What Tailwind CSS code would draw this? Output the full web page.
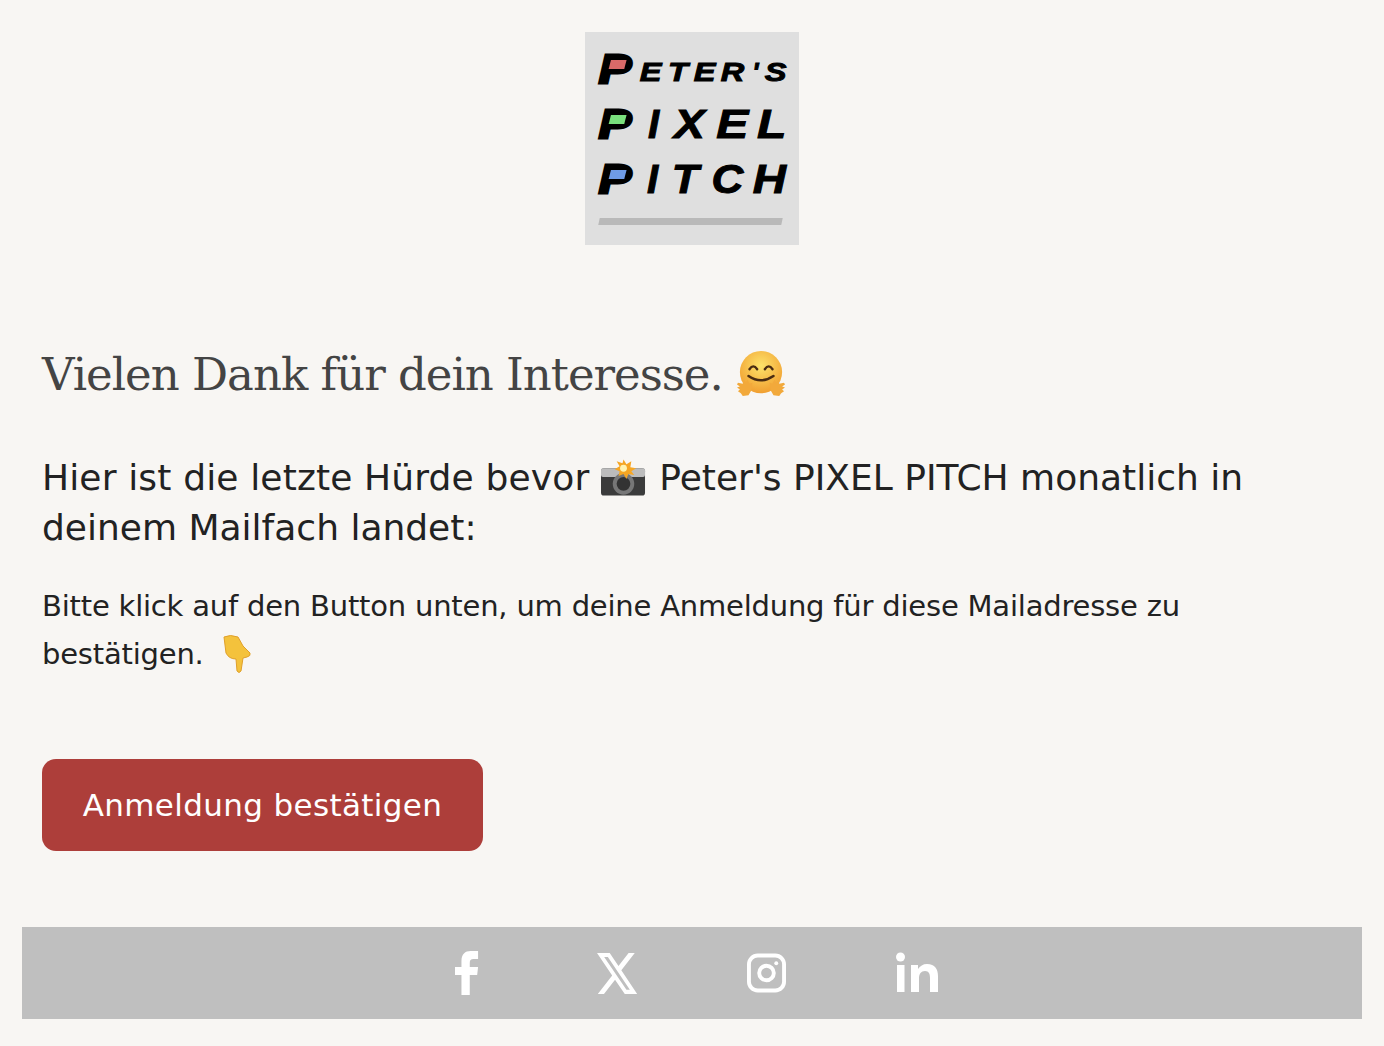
<!DOCTYPE html>
<html lang="de">
<head>
  <meta charset="UTF-8" />
  <meta name="viewport" content="width=device-width, initial-scale=1.0" />
  <title>Peter's Pixel Pitch</title>
  <script src="https://cdn.jsdelivr.net/npm/@tailwindcss/browser@4"></script>
</head>
<body class="bg-[#f8f6f3] h-[1046px] overflow-hidden font-['DejaVu_Sans',sans-serif] text-[#222]">
  <div class="pt-8 flex justify-center">
    <!-- logo -->
    <div class="w-[214px] h-[213px] bg-[#dfdfdf] pl-[14px] pr-[13px] pt-[10px] flex flex-col font-['Liberation_Sans',sans-serif] font-bold italic text-black leading-none">
      <div class="h-[45px] flex items-end justify-between text-[26px] [-webkit-text-stroke:1px_black]">
        <span class="relative origin-left scale-x-[1.2] mr-[6px] text-[40px] leading-[36px] [-webkit-text-stroke:3px_black]">P<span class="absolute left-[9px] top-[9px] w-[13px] h-[9px] bg-[#d96a68] -skew-x-12"></span></span>
        <span class="mb-[2px] scale-x-[1.25]">E</span><span class="mb-[2px] scale-x-[1.25]">T</span><span class="mb-[2px] scale-x-[1.25]">E</span><span class="mb-[2px] scale-x-[1.25]">R</span><span class="mb-[2px]">'</span><span class="mb-[2px] scale-x-[1.25] origin-right">S</span>
      </div>
      <div class="h-[55px] flex items-end justify-between text-[40px] [-webkit-text-stroke:1px_black]">
        <span class="relative origin-left scale-x-[1.2] mr-[6px] leading-[36px] [-webkit-text-stroke:3px_black]">P<span class="absolute left-[9px] top-[9px] w-[13px] h-[9px] bg-[#79e07d] -skew-x-12"></span></span>
        <span class="leading-[36px]">I</span><span class="leading-[36px] scale-x-[1.15]">X</span><span class="leading-[36px] scale-x-[1.2]">E</span><span class="leading-[36px] origin-right scale-x-[1.2]">L</span>
      </div>
      <div class="h-[55px] flex items-end justify-between text-[40px] [-webkit-text-stroke:1px_black]">
        <span class="relative origin-left scale-x-[1.2] mr-[6px] leading-[36px] [-webkit-text-stroke:3px_black]">P<span class="absolute left-[9px] top-[9px] w-[13px] h-[9px] bg-[#6f9be6] -skew-x-12"></span></span>
        <span class="leading-[36px]">I</span><span class="leading-[36px] scale-x-[1.1]">T</span><span class="leading-[36px] scale-x-[1.1]">C</span><span class="leading-[36px] origin-right scale-x-[1.15]">H</span>
      </div>
      <div class="mt-[21px] h-[7px] w-[183px] bg-[#b9b9b9] -skew-x-12"></div>
    </div>
  </div>

  <div class="px-[42px]">
    <h1 class="mt-[99px] h-[62px] flex items-center gap-[14px] font-['DejaVu_Serif',serif] font-normal text-[45px] leading-[62px] text-[#444] tracking-[-1px]">
      Vielen Dank für dein Interesse.
      <svg class="w-[48px] h-[48px] shrink-0" viewBox="0 0 50 50">
        <defs>
          <radialGradient id="face" cx="50%" cy="35%" r="70%"><stop offset="0" stop-color="#fde36a"/><stop offset="1" stop-color="#f09a2c"/></radialGradient>
        </defs>
        <circle cx="25" cy="22" r="22" fill="url(#face)"/>
        <path d="M13 19q4-6 8 0M29 19q4-6 8 0" fill="none" stroke="#4a2c12" stroke-width="2.4" stroke-linecap="round"/>
        <path d="M12 26q13 9 26 0" fill="none" stroke="#4a2c12" stroke-width="2.6" stroke-linecap="round"/>
        <path d="M1 33l5 1 1-4 2 3 2-3 2 4 3-1-1 8-3 5-6 1-2-3-3-2 2-2-3-2 3-1-3-2zM49 33l-5 1-1-4-2 3-2-3-2 4-3-1 1 8 3 5 6 1 2-3 3-2-2-2 3-2-3-1 3-2z" fill="#f2a93b"/>
      </svg>
    </h1>

    <h2 class="mt-[47px] font-normal text-[36px] leading-[50px] text-[#222]">
      <span class="tracking-[0.15px]">Hier ist die letzte Hürde bevor</span>
      <svg class="inline-block w-[45px] h-[38px] align-[-7px] mr-[2px]" viewBox="0 0 46 38">
        <rect x="0" y="9" width="45" height="28" rx="3" fill="#3b3b3b"/>
        <rect x="0" y="9" width="45" height="9" rx="2" fill="#bcbcbc"/>
        <circle cx="23" cy="25" r="11" fill="#777"/>
        <circle cx="23" cy="25" r="7" fill="#333"/>
        <path d="M23 0l3 5 5-3-1 6 6 1-5 3 3 4-6-1-2 5-3-5-5 2 1-5-5-2 5-3-3-5 6 2z" fill="#f6a623"/>
        <circle cx="23" cy="9" r="3.5" fill="#fff3b0"/>
      </svg>
      Peter's PIXEL PITCH monatlich in<br>
      deinem Mailfach landet:
    </h2>

    <p class="mt-[29px] text-[29px] leading-[48px] tracking-[-0.2px] text-[#222]">
      Bitte klick auf den Button unten, um deine Anmeldung für diese Mailadresse zu<br>
      bestätigen.
      <svg class="inline-block w-[32px] h-[40px] align-[-10px] ml-[8px]" viewBox="0 0 32 40">
        <path d="M3 3q6-3 14 0l5 9 7 7q1 3-3 4l-4 1-2 13q-2 3-4 0l-1-12q-7 0-10-6z" fill="#f4c23c" stroke="#e0a02a" stroke-width="1"/>
      </svg>
    </p>

    <a class="mt-[81px] w-[441px] h-[92px] rounded-[14px] bg-[#ad3e3a] text-white text-[31px] tracking-[0.35px] flex items-center justify-center">Anmeldung bestätigen</a>
  </div>

  <div class="mt-[76px] mx-[22px] h-[92px] pl-[9px] bg-[#bfbfbf] flex items-center justify-center gap-[110px] text-white">
    <!-- facebook -->
    <svg class="w-[24px] h-[44px] mr-[8px]" viewBox="0 0 26 44" fill="#fff" preserveAspectRatio="none"><path d="M7 44V24H0v-8h7v-6C7 3 11 0 17 0h8v8h-5c-3 0-4 1-4 4v4h9l-1 8h-8v20z"/></svg>
    <!-- x -->
    <svg class="w-[40px] h-[41px]" viewBox="1.25 2.25 21.5 19.5" fill="#fff" preserveAspectRatio="none"><path d="M18.244 2.25h3.308l-7.227 8.26 8.502 11.24H16.17l-5.214-6.817L4.99 21.75H1.68l7.73-8.835L1.254 2.25H8.08l4.713 6.231zm-1.161 17.52h1.833L7.084 4.126H5.117z"/></svg>
    <!-- instagram -->
    <svg class="w-[39px] h-[40px]" viewBox="0 0 40 40" fill="none" stroke="#fff" stroke-width="4"><rect x="2" y="2" width="36" height="36" rx="9"/><circle cx="20" cy="20" r="7.5"/><circle cx="30" cy="10" r="2" fill="#fff" stroke="none"/></svg>
    <!-- linkedin -->
    <svg class="w-[42px] h-[42px]" viewBox="0 0 42 42" fill="#fff"><circle cx="4.5" cy="5" r="4.5"/><rect x="1" y="13" width="7.5" height="27"/><path d="M15 13h7v4c2-3 5-5 9-5 8 0 11 5 11 12v16h-8V26c0-4-1-7-5-7s-6 3-6 7v14h-8z"/></svg>
  </div>
</body>
</html>
